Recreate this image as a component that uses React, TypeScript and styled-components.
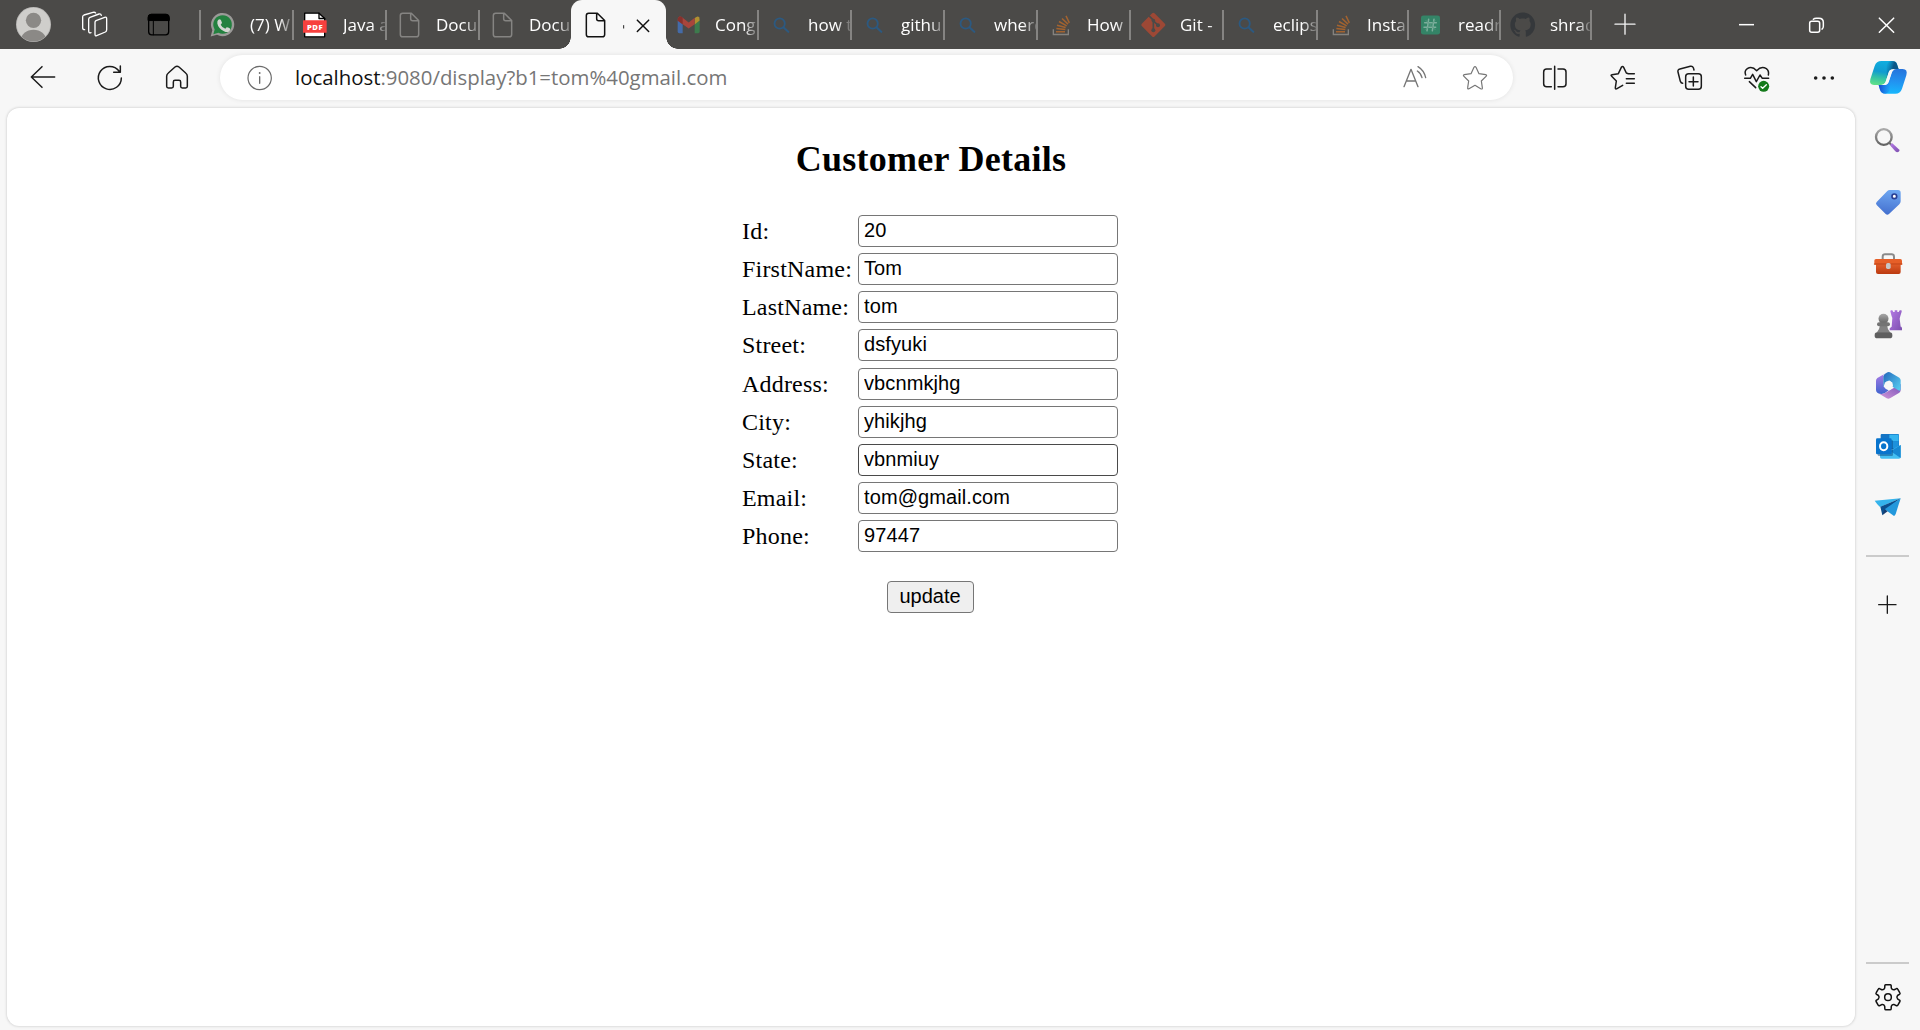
import React from 'react';
import styled, { createGlobalStyle } from 'styled-components';

const GlobalStyle = createGlobalStyle`
  * { box-sizing: border-box; }
  body { margin: 0; background: #f7f7f7; overflow: hidden; }
`;

const UI_FONT = `'Open Sans', 'Noto Sans', sans-serif`;

const Browser = styled.div`
  width: 1920px;
  height: 1030px;
  display: flex;
  flex-direction: column;
  background: #f7f7f7;
  font-family: ${UI_FONT};
`;

const TabStrip = styled.header`
  height: 49px;
  flex: none;
  display: flex;
  align-items: stretch;
  background: #4b4a48;
`;

const Slot = styled.div<{ $w: number; $h?: number }>`
  width: ${(p) => p.$w}px;
  height: ${(p) => (p.$h ? `${p.$h}px` : 'auto')};
  flex: none;
  display: flex;
  align-items: center;
  justify-content: center;
`;

const Art = styled.svg`
  display: block;
  flex: none;
  overflow: visible;
`;

const Separator = styled.span`
  width: 2px;
  height: 30px;
  flex: none;
  align-self: center;
  background: #858482;
`;

const LeadSeparator = styled(Separator)`
  margin-left: 4px;
`;

const Tab = styled.div<{ $w: number }>`
  width: ${(p) => p.$w}px;
  flex: none;
  display: flex;
  align-items: center;
  padding-left: 8px;
`;

const TabTitle = styled.span`
  flex: 1;
  min-width: 0;
  margin-left: 13px;
  overflow: hidden;
  white-space: nowrap;
  font-size: 17px;
  line-height: 26px;
  color: #fff;
  mask-image: linear-gradient(90deg, #000 68%, transparent 108%);
`;

const ActiveTab = styled.div`
  position: relative;
  width: 95px;
  flex: none;
  display: flex;
  align-items: center;
  padding-left: 10px;
  background: #f7f7f7;
  border-radius: 11px 11px 0 0;
  &::before,
  &::after {
    content: '';
    position: absolute;
    bottom: 0;
    width: 12px;
    height: 12px;
  }
  &::before {
    left: -12px;
    background: radial-gradient(circle at 0 0, transparent 11.5px, #f7f7f7 12px);
  }
  &::after {
    right: -12px;
    background: radial-gradient(circle at 100% 0, transparent 11.5px, #f7f7f7 12px);
  }
`;

const ActiveTitle = styled.div`
  margin-left: 11px;
`;

const Spacer = styled.div`
  flex: 1;
`;

const Toolbar = styled.nav`
  height: 58px;
  flex: none;
  display: flex;
  align-items: center;
  padding-left: 10px;
`;

const AddressBar = styled.div`
  width: 1293px;
  height: 45px;
  align-self: flex-start;
  margin: 6px 9px 0 10px;
  padding: 1px 8px 0 23px;
  display: flex;
  align-items: center;
  background: #fff;
  border-radius: 23px;
  box-shadow: 0 0 5px rgba(0, 0, 0, 0.09);
`;

const Url = styled.div`
  flex: 1;
  margin-left: 18px;
  padding-bottom: 2px;
  font-size: 20.4px;
  line-height: 28px;
  color: #767676;
  white-space: nowrap;
`;

const Host = styled.span`
  color: #111;
`;

const Body = styled.div`
  flex: 1;
  min-height: 0;
  display: flex;
  padding-top: 1px;
`;

const Page = styled.main`
  width: 1848px;
  margin: 0 0 4px 7px;
  padding-top: 31px;
  flex: none;
  background: #fff;
  border-radius: 12px;
  box-shadow: 0 0 3px rgba(0, 0, 0, 0.22);
  font-family: 'Liberation Serif', serif;
  color: #000;
`;

const Heading = styled.h2`
  margin: 0;
  font-size: 36px;
  line-height: 40px;
  font-weight: 700;
  letter-spacing: 0.26px;
  text-align: center;
`;

const Form = styled.form`
  margin: 36px 2px 0 0;
  display: flex;
  flex-direction: column;
  align-items: center;
`;

const Row = styled.div`
  height: 38.125px;
  display: grid;
  grid-template-columns: 116px 260px;
  align-items: start;
`;

const Label = styled.label`
  font-size: 24px;
  line-height: 32px;
  letter-spacing: 0.2px;
`;

const Field = styled.input<{ $hover?: boolean }>`
  width: 260px;
  height: 32px;
  padding: 0 5px 1px 5px;
  border: 1px solid ${(p) => (p.$hover ? '#4a4a4a' : '#767676')};
  border-radius: 4px;
  background: #fff;
  color: #000;
  font: 20px 'Liberation Sans', sans-serif;
  letter-spacing: 0.1px;
  outline: none;
`;

const Submit = styled.button`
  width: 87px;
  height: 32px;
  margin-top: 23px;
  padding: 0 0 2px;
  border: 1px solid #767676;
  border-radius: 4px;
  background: #efefef;
  color: #000;
  font: 20px 'Liberation Sans', sans-serif;
`;

const Sidebar = styled.aside`
  width: 65px;
  flex: none;
  display: flex;
  flex-direction: column;
  align-items: center;
  padding: 2px 0;
`;

const Rule = styled.span<{ $top?: number; $bottom: number }>`
  width: 43px;
  height: 2px;
  flex: none;
  margin: ${(p) => p.$top ?? 0}px 0 ${(p) => p.$bottom}px;
  background: #cbcbcb;
`;

/* Icons are drawn on a grid of three units to the pixel, centred on (x, y). */
type GlyphProps = { x: number; y: number; size?: number; children: React.ReactNode };
const Glyph = ({ x, y, size = 34, children }: GlyphProps) => (
  <Art
    width={size}
    height={size}
    viewBox={`${x - size * 1.5} ${y - size * 1.5} ${size * 3} ${size * 3}`}
    fill="none"
    strokeLinecap="round"
    strokeLinejoin="round"
  >
    {children}
  </Art>
);

const TabGlyph = ({ x, children }: { x: number; children: React.ReactNode }) => (
  <Glyph x={x} y={73.5} size={28}>
    {children}
  </Glyph>
);

const DocIcon = ({ color }: { color: string }) => (
  <TabGlyph x={1227}>
    <path
      d="M1208 38H1234L1256 60V102Q1256 109 1249 109H1208Q1201 109 1201 102V45Q1201 38 1208 38ZM1232 39V55Q1232 61 1238 61H1255"
      stroke={color}
      strokeWidth="4.5"
    />
  </TabGlyph>
);

const SearchIcon = () => (
  <TabGlyph x={903}>
    <circle cx="899" cy="69" r="15.5" stroke="#2c5980" strokeWidth="5.5" />
    <path d="M911 81L925 94" stroke="#2c5980" strokeWidth="6" />
  </TabGlyph>
);

const WhatsAppIcon = () => (
  <TabGlyph x={669}>
    <path d="M632 108L637 89A35 35 0 1 1 651 103Z" fill="#9b9a98" />
    <path d="M640 101L644 87A28 28 0 1 1 655 97Z" fill="#23813f" />
    <path
      d="M655 58Q660 54 663 59L666 67Q665 70 662 73Q667 83 676 85L680 80Q684 80 690 84Q692 88 688 92Q682 97 672 92Q655 84 652 69Q651 62 655 58Z"
      fill="#d3d6d2"
    />
  </TabGlyph>
);

const PdfFont = styled.text`
  font: 800 23px 'Open Sans', sans-serif;
  letter-spacing: 1.5px;
`;

const PdfIcon = () => (
  <TabGlyph x={948}>
    <path d="M914 38H957L974 54V109H914Z" fill="#fff" stroke="#000" strokeWidth="4" />
    <path d="M957 38V54H974" stroke="#000" strokeWidth="4" />
    <rect x="909" y="59" width="71" height="38" rx="2" fill="#f7403e" />
    <PdfFont x="945" y="87" textAnchor="middle" fill="#fff">PDF</PdfFont>
  </TabGlyph>
);

const GmailIcon = () => (
  <TabGlyph x={624}>
    <path d="M593 60L608 71V98H598Q593 98 593 93Z" fill="#446ba8" />
    <path d="M644 71L659 60V93Q659 98 654 98H644Z" fill="#3d7b4d" />
    <path d="M644 53L648 50Q654 46 658 51L659 60L644 72Z" fill="#b09030" />
    <path d="M593 60Q592 51 598 48Q603 47 608 52L626 66L644 52V71L626 84L608 71Z" fill="#a8453c" />
    <path d="M593 60Q592 51 598 48Q603 47 608 52V71Z" fill="#87312d" />
  </TabGlyph>
);

const StackIcon = () => (
  <TabGlyph x={300}>
    <path d="M280 86V102H325V86" stroke="#85827e" strokeWidth="4" strokeLinecap="butt" strokeLinejoin="miter" />
    <path
      d="M288 94H315M289 84L316 87M291 74L317 81M297 63L320 76M306 54L324 71M318 46L328 67"
      stroke="#a3632f"
      strokeWidth="4.5"
      strokeLinecap="butt"
    />
  </TabGlyph>
);

const GitIcon = () => (
  <TabGlyph x={579}>
    <rect x="553" y="46" width="54" height="54" rx="5" transform="rotate(45 580 73)" fill="#9d4835" />
    <path d="M568 47L580 59V89M580 61L593 73" stroke="#4b4a48" strokeWidth="5" />
    <circle cx="580" cy="60" r="5.5" fill="#4b4a48" />
    <circle cx="580" cy="89" r="6" fill="#4b4a48" />
    <circle cx="594" cy="74" r="6" fill="#4b4a48" />
  </TabGlyph>
);

const ReadmeIcon = () => (
  <TabGlyph x={1413}>
    <rect x="1383" y="45" width="57" height="57" rx="7" fill="#348467" />
    <path
      d="M1406 56L1401 91M1422 56L1417 91M1394 67H1429M1392 80H1427"
      stroke="#7cae9c"
      strokeWidth="4.5"
    />
    <path d="M1398 60L1425 87M1398 87L1425 60" stroke="#5a9a82" strokeWidth="3" />
  </TabGlyph>
);

const GitHubIcon = () => (
  <TabGlyph x={249}>
    <g transform="translate(211 36) scale(4.65)">
      <path
        fill="#35383b"
        d="M8 0C3.58 0 0 3.58 0 8c0 3.54 2.29 6.53 5.47 7.59.4.07.55-.17.55-.38 0-.19-.01-.82-.01-1.49-2.01.37-2.53-.49-2.69-.94-.09-.23-.48-.94-.82-1.13-.28-.15-.68-.52-.01-.53.63-.01 1.08.58 1.23.82.72 1.21 1.87.87 2.33.66.07-.52.28-.87.51-1.07-1.78-.2-3.64-.89-3.64-3.95 0-.87.31-1.59.82-2.15-.08-.2-.36-1.02.08-2.12 0 0 .67-.21 2.2.82.64-.18 1.32-.27 2-.27s1.36.09 2 .27c1.53-1.04 2.2-.82 2.2-.82.44 1.1.16 1.92.08 2.12.51.56.82 1.27.82 2.15 0 3.07-1.87 3.75-3.65 3.95.29.25.54.73.54 1.48 0 1.07-.01 1.93-.01 2.2 0 .21.15.46.55.38A8.01 8.01 0 0 0 16 8c0-4.42-3.58-8-8-8"
      />
    </g>
  </TabGlyph>
);

const CopilotIcon = () => (
  <Glyph x={1344} y={234} size={40}>
    <defs>
      <linearGradient id="cpLeft" x1="0.5" y1="0" x2="0.3" y2="1">
        <stop offset="0" stopColor="#10aee0" />
        <stop offset="0.45" stopColor="#119cd0" />
        <stop offset="0.72" stopColor="#35c3a4" />
        <stop offset="1" stopColor="#5fe08a" />
      </linearGradient>
      <linearGradient id="cpRight" x1="0.6" y1="0" x2="0.5" y2="1">
        <stop offset="0" stopColor="#2574dc" />
        <stop offset="0.5" stopColor="#2292f0" />
        <stop offset="1" stopColor="#17b7fd" />
      </linearGradient>
      <linearGradient id="cpFold" x1="0" y1="0" x2="1" y2="0.4">
        <stop offset="0" stopColor="#0b7fb8" stopOpacity="0" />
        <stop offset="0.6" stopColor="#0a5687" />
      </linearGradient>
      <linearGradient id="cpFoot" x1="0" y1="0" x2="1" y2="0">
        <stop offset="0" stopColor="#1746cf" />
        <stop offset="1" stopColor="#1a6de6" stopOpacity="0" />
      </linearGradient>
    </defs>
    <path d="M1376 208L1371 193Q1368 183 1356 183H1324Q1309 183 1304 198L1291 238Q1287 255 1302 255H1322Q1334 255 1338 242L1345 219Q1348 208 1359 208Z" fill="url(#cpLeft)" />
    <path d="M1340 196Q1344 183 1356 183Q1368 183 1371 193L1376 208H1359Q1348 208 1345 219L1340 235Z" fill="url(#cpFold)" />
    <path d="M1316 255L1320 269Q1324 281 1336 281H1366Q1381 281 1386 266L1399 226Q1404 207 1388 207H1370Q1358 207 1354 220L1346 245Q1342 255 1332 255Z" fill="url(#cpRight)" />
    <path d="M1316 255L1320 269Q1324 281 1336 281Q1346 281 1349 268L1354 225L1346 245Q1342 255 1332 255Z" fill="url(#cpFoot)" />
    <path d="M1346 218Q1349 208 1359 208H1368Q1358 209 1355 220L1346 246Q1343 255 1333 255H1324Q1335 254 1338 243Z" fill="#f7f7f7" />
  </Glyph>
);

const SideGlyph = ({ y, children }: { y: number; children: React.ReactNode }) => (
  <Slot $w={65} $h={61}>
    <Glyph x={142.5} y={y} size={31}>
      {children}
    </Glyph>
  </Slot>
);

const polar = (r: number, deg: number) => {
  const a = (deg * Math.PI) / 180;
  return `${(204 + r * Math.cos(a)).toFixed(1)} ${(201.5 + r * Math.sin(a)).toFixed(1)}`;
};

/* Six-toothed settings cog: each tooth flares out of a shallow valley. */
const cogPath =
  [30, 90, 150, 210, 270, 330]
    .map(
      (t, i) =>
        `${i ? 'L' : 'M'}${polar(29, t - 20)}L${polar(36.5, t - 15)}Q${polar(38.5, t - 13)} ${polar(38, t - 10)}L${polar(38, t + 10)}Q${polar(38.5, t + 13)} ${polar(36.5, t + 15)}L${polar(29, t + 20)}Q${polar(24.5, t + 30)} ${polar(29, t + 40)}`,
    )
    .join('') + 'Z';

type TabInfo = { title: string; icon: React.ReactNode; w?: number; last?: boolean };

const leftTabs: TabInfo[] = [
  { title: '(7) W', icon: <WhatsAppIcon /> },
  { title: 'Java a', icon: <PdfIcon /> },
  { title: 'Docu', icon: <DocIcon color="#858482" /> },
  { title: 'Docu', icon: <DocIcon color="#858482" />, w: 91, last: true },
];

const rightTabs: TabInfo[] = [
  { title: 'Cong', icon: <GmailIcon /> },
  { title: 'how t', icon: <SearchIcon /> },
  { title: 'githu', icon: <SearchIcon /> },
  { title: 'where', icon: <SearchIcon /> },
  { title: 'How', icon: <StackIcon /> },
  { title: 'Git -', icon: <GitIcon /> },
  { title: 'eclips', icon: <SearchIcon />, w: 94 },
  { title: 'Instal', icon: <StackIcon />, w: 91 },
  { title: 'readn', icon: <ReadmeIcon />, w: 92 },
  { title: 'shrad', icon: <GitHubIcon />, w: 91 },
];

const renderTab = (t: TabInfo, i: number) => (
  <Tab key={i} $w={t.w ?? 93}>
    {t.icon}
    <TabTitle>{t.title}</TabTitle>
    {!t.last && <Separator />}
  </Tab>
);

const fields = [
  ['Id', '20'],
  ['FirstName', 'Tom'],
  ['LastName', 'tom'],
  ['Street', 'dsfyuki'],
  ['Address', 'vbcnmkjhg'],
  ['City', 'yhikjhg'],
  ['State', 'vbnmiuy'],
  ['Email', 'tom@gmail.com'],
  ['Phone', '97447'],
];

const INK = '#1b1b1b';

export default function App() {
  return (
    <Browser>
      <GlobalStyle />
      <TabStrip>
        <Slot $w={67}>
          <Glyph x={100.5} y={73.5} size={35}>
            <clipPath id="avatar">
              <circle cx="100.5" cy="73.5" r="51" />
            </clipPath>
            <circle cx="100.5" cy="73.5" r="52.5" fill="#bab9b7" />
            <g clipPath="url(#avatar)">
              <circle cx="100.5" cy="73.5" r="50" fill="#cfcecb" />
              <circle cx="100.5" cy="61" r="23" fill="#8b8986" />
              <ellipse cx="100.5" cy="121" rx="38" ry="32" fill="#8b8986" />
            </g>
          </Glyph>
        </Slot>
        <Slot $w={56}>
          <Glyph x={286.5} y={73.5} size={35}>
            <path
              d="M285 67Q285 64 288 62L314 52Q320 50 320 56V89Q320 94 316 96L290 107Q285 109 285 103Z"
              stroke="#fff" strokeWidth="4"
            />
            <path
              d="M273 98Q266 100 266 93V58Q266 54 270 52L297 42Q303 41 304 46M254 89Q248 89 248 83V50Q248 47 252 45L279 37Q285 36 287 39"
              stroke="#fff" strokeWidth="4"
            />
          </Glyph>
        </Slot>
        <Slot $w={72}>
          <Glyph x={477} y={73.5} size={34}>
            <rect x="446" y="43" width="60" height="60" rx="9" stroke="#000" strokeWidth="4" />
            <path d="M444 59V51Q444 41 454 41H498Q508 41 508 51V59ZM460 57V103" fill="#000" stroke="#000" strokeWidth="3" />
          </Glyph>
        </Slot>
        <LeadSeparator />
        {leftTabs.map(renderTab)}
        <ActiveTab>
          <DocIcon color="#111" />
          <ActiveTitle>
            <Glyph x={432} y={73.5} size={8}>
              <path d="M431 74V84" stroke="#222" strokeWidth="3" strokeLinecap="butt" />
            </Glyph>
          </ActiveTitle>
          <Glyph x={486} y={73.5} size={28}>
            <path d="M472 59L506 93M506 59L472 93" stroke="#111" strokeWidth="4.5" />
          </Glyph>
        </ActiveTab>
        {rightTabs.map(renderTab)}
        <Slot $w={66}>
          <Glyph x={555} y={73.5} size={34}>
            <path d="M525 71H585M555 41V101" stroke="#f4f4f4" strokeWidth="4" />
          </Glyph>
        </Slot>
        <Spacer />
        <Slot $w={70}>
          <Glyph x={915} y={73.5} size={30}>
            <path d="M897 72.5H942" stroke="#fff" strokeWidth="4.5" strokeLinecap="butt" />
          </Glyph>
        </Slot>
        <Slot $w={70}>
          <Glyph x={1125} y={73.5} size={30}>
            <rect x="1109" y="62" width="30" height="33" rx="6" stroke="#fff" strokeWidth="4.5" />
            <path d="M1120 56Q1123 53 1129 53H1137Q1150 53 1150 66V77Q1150 83 1146 86" stroke="#fff" strokeWidth="4.5" />
          </Glyph>
        </Slot>
        <Slot $w={70}>
          <Glyph x={1335} y={73.5} size={30}>
            <path d="M1318 53L1361 95M1361 53L1318 95" stroke="#fff" strokeWidth="4.5" />
          </Glyph>
        </Slot>
      </TabStrip>

      <Toolbar>
        <Slot $w={66}>
          <Glyph x={129} y={234}>
            <path d="M164 231H94M126 200L94 231L126 262" stroke={INK} strokeWidth="4.5" />
          </Glyph>
        </Slot>
        <Slot $w={68}>
          <Glyph x={330} y={234}>
            <path d="M364 234A34.5 34.5 0 1 1 357 213M361 198V217H341" stroke={INK} strokeWidth="4.5" />
          </Glyph>
        </Slot>
        <Slot $w={66}>
          <Glyph x={531} y={234}>
            <path
              d="M525 201Q531 196 537 201L557 219Q562 223 562 229V259Q562 264 557 264H547Q542 264 542 259V246Q542 241 537 241H525Q520 241 520 246V259Q520 264 515 264H505Q500 264 500 259V229Q500 223 505 219Z"
              stroke={INK} strokeWidth="4.5"
            />
          </Glyph>
        </Slot>
        <AddressBar>
          <Glyph x={780} y={234}>
            <circle cx="779" cy="234" r="35" stroke="#6b6b6b" strokeWidth="3.6" />
            <path d="M779 230V250" stroke="#6b6b6b" strokeWidth="4" />
            <circle cx="779" cy="219" r="2.8" fill="#6b6b6b" />
          </Glyph>
          <Url>
            <Host>localhost</Host>:9080/display?b1=tom%40gmail.com
          </Url>
          <Slot $w={60}>
            <Glyph x={1365} y={234}>
              <path
                d="M1332 260L1353 208L1374 260M1339 243H1367M1372 213Q1383 220 1386 233M1374 200Q1392 211 1397 233"
                stroke="#767676" strokeWidth="4"
              />
            </Glyph>
          </Slot>
          <Slot $w={60}>
            <Glyph x={105} y={234}>
              <path
                d="M102 202Q105 197 108 202L117 221L137 224Q142 225 138 229L124 243L127 263Q128 269 122 266L105 256L87 266Q82 268 83 263L86 243L72 229Q68 225 73 224L93 221Z"
                stroke="#767676" strokeWidth="3.6"
              />
            </Glyph>
          </Slot>
        </AddressBar>
        <Slot $w={66}>
          <Glyph x={345} y={234}>
            <path
              d="M344 199V268M334 207H320Q311 207 311 216V251Q311 260 320 260H334M354 207H369Q378 207 378 216V251Q378 260 369 260H354"
              stroke={INK} strokeWidth="4.5"
            />
          </Glyph>
        </Slot>
        <Slot $w={68}>
          <Glyph x={546} y={234}>
            <path
              d="M583 221H565L559 219L551 202Q548 197 544 202L535 221L516 224Q511 225 515 229L529 243L526 263Q526 269 531 266L548 256M559 236H583M559 250H583"
              stroke={INK} strokeWidth="4.5"
            />
          </Glyph>
        </Slot>
        <Slot $w={66}>
          <Glyph x={747} y={234}>
            <rect x="737" y="221" width="47" height="47" rx="9" stroke={INK} strokeWidth="4.5" />
            <path
              d="M760 231V258M747 245H774M762 210L760 203Q758 198 751 199L720 207Q712 209 714 216L721 244Q723 250 728 250"
              stroke={INK} strokeWidth="4.5"
            />
          </Glyph>
        </Slot>
        <Slot $w={70}>
          <Glyph x={951} y={234}>
            <path
              d="M917 225Q912 213 922 206Q936 197 950 212Q964 197 979 206Q988 213 985 225M914 235H931L938 223L949 245L960 225L967 235H986M928 245L947 263"
              stroke={INK} strokeWidth="4.5"
            />
            <circle cx="971" cy="259" r="16.5" fill="#147a1b" />
            <path d="M963 260L968 265L979 254" stroke="#fff" strokeWidth="4" />
          </Glyph>
        </Slot>
        <Slot $w={64}>
          <Glyph x={1152} y={234}>
            <circle cx="1127" cy="234" r="5.4" fill={INK} />
            <circle cx="1152" cy="234" r="5.4" fill={INK} />
            <circle cx="1177" cy="234" r="5.4" fill={INK} />
          </Glyph>
        </Slot>
        <Slot $w={64}>
          <CopilotIcon />
        </Slot>
      </Toolbar>

      <Body>
        <Page>
          <Heading>Customer Details</Heading>
          <Form onSubmit={(e) => e.preventDefault()}>
            {fields.map(([name, value]) => (
              <Row key={name}>
                <Label htmlFor={name}>{name}:</Label>
                <Field id={name} defaultValue={value} $hover={name === 'State'} spellCheck={false} />
              </Row>
            ))}
            <Submit type="submit">update</Submit>
          </Form>
        </Page>

        <Sidebar>
          <SideGlyph y={91.5}>
            <defs>
              <linearGradient id="violet" x1="0" y1="0" x2="1" y2="1">
                <stop offset="0" stopColor="#b57be6" />
                <stop offset="1" stopColor="#7c4fae" />
              </linearGradient>
              <linearGradient id="grey" x1="0" y1="0" x2="0" y2="1">
                <stop offset="0" stopColor="#a9a9a9" />
                <stop offset="1" stopColor="#636363" />
              </linearGradient>
            </defs>
            <path d="M148 99L158 108" stroke="#6d6d6d" strokeWidth="6" />
            <circle cx="131.500" cy="81" r="23.500" stroke="url(#grey)" strokeWidth="7" />
            <path d="M152 108Q150 104 153 102L157 100L178 119Q180 122 176 125L172 127Q169 127 166 124Z" fill="url(#violet)" />
          </SideGlyph>
          <SideGlyph y={274.5}>
            <defs>
              <linearGradient id="tag" x1="0.6" y1="0" x2="0.5" y2="1">
                <stop offset="0" stopColor="#6fa8f2" />
                <stop offset="1" stopColor="#4470cf" />
              </linearGradient>
            </defs>
            <path d="M149 240H174Q182 240 182 248V274Q182 279 178 283L147 312Q142 316 137 312L110 285Q106 280 110 276L142 243Q145 240 149 240Z" fill="url(#tag)" />
            <circle cx="163" cy="259" r="7" fill="#fff" stroke="#293f94" strokeWidth="5" />
          </SideGlyph>
          <SideGlyph y={457.5}>
            <defs>
              <linearGradient id="box" x1="0" y1="0" x2="0" y2="1">
                <stop offset="0" stopColor="#e4602c" />
                <stop offset="1" stopColor="#bb3a10" />
              </linearGradient>
            </defs>
            <path d="M128 449V440Q128 433 135 433H155Q162 433 162 440V449" stroke="#8a8a8a" strokeWidth="6" strokeLinecap="butt" />
            <path d="M108 460H182V486Q182 492 176 492H114Q108 492 108 486Z" fill="url(#box)" />
            <path d="M108 447H181Q186 447 186 452V464H103V452Q103 447 108 447Z" fill="#e65f28" />
            <path d="M103 462H186" stroke="#bf4216" strokeWidth="3" />
            <rect x="138" y="459" width="14" height="18" rx="5" fill="#c6c6c6" />
          </SideGlyph>
          <SideGlyph y={640.5}>
            <path d="M151 604Q151 601 154 601H157L160 606H164V601H172V606H176L179 601H183Q186 601 185 605L181 618Q180 621 179 626L182 650H184Q187 652 186 661H149V655L155 650L157 624Q155 619 154 616Z" fill="url(#violet)" />
            <circle cx="130.500" cy="626" r="15" fill="url(#grey)" />
            <path d="M120 646H141Q142 658 151 668H110Q119 658 120 646Z" fill="#828282" />
            <rect x="111" y="637" width="39" height="12" rx="6" fill="#747474" />
            <rect x="104" y="667" width="53" height="18" rx="8" fill="#5f5f5f" />
          </SideGlyph>
          <SideGlyph y={73.5}>
            <defs>
              <linearGradient id="m1" x1="0" y1="0" x2="0" y2="1">
                <stop offset="0" stopColor="#b07ce6" />
                <stop offset="1" stopColor="#3f64cf" />
              </linearGradient>
              <linearGradient id="m2" x1="0" y1="0" x2="1" y2="0.8">
                <stop offset="0" stopColor="#2467bb" />
                <stop offset="1" stopColor="#52c8ee" />
              </linearGradient>
              <linearGradient id="m3" x1="1" y1="0" x2="0" y2="1">
                <stop offset="0" stopColor="#7650b9" />
                <stop offset="1" stopColor="#d79ad9" />
              </linearGradient>
            </defs>
            <path d="M140 38L112 54Q108 57 108 62V90Q108 95 112 98Q121 105 134 100L146 91L133 82Q130 80 130 75V45Z" fill="url(#m1)" />
            <path d="M114 99Q124 105 135 99L182 72V90Q182 95 178 98L150 115Q145 117 140 115Z" fill="url(#m3)" />
            <path d="M130 80V49Q132 41 140 38Q145 34 150 37L178 53Q182 56 182 61V88Q180 94 175 91L157 80V68L147 61Z" fill="url(#m2)" />
            <circle cx="145.500" cy="76" r="13" fill="#f7f7f7" />
          </SideGlyph>
          <SideGlyph y={256.5}>
            <rect x="122" y="222" width="55" height="46" rx="3" fill="#1475c5" />
            <rect x="148" y="224" width="28" height="20" fill="#35b4ef" />
            <rect x="148" y="244" width="28" height="20" fill="#1c91dc" />
            <path d="M120 258L150 272L182 255V291Q182 296 177 296H125Q120 296 120 291Z" fill="#43bff2" />
            <path d="M182 255L152 274L182 294Z" fill="#1687d2" />
            <rect x="113" y="240" width="46" height="48" rx="4" fill="#0e4a80" opacity="0.5" />
            <rect x="108" y="235" width="47" height="48" rx="4" fill="#0874cd" />
            <ellipse cx="131" cy="259" rx="11" ry="12" stroke="#fff" strokeWidth="6" />
          </SideGlyph>
          <SideGlyph y={439.5}>
            <path d="M104 422L182 415L120 441Q110 431 104 422Z" fill="#35b4ec" />
            <path d="M182 415L121 440L127 466L140 448Z" fill="#0c4f8d" />
            <path d="M182 415L134 448L162 468Q165 467 167 462Z" fill="#2398dc" />
            <path d="M127 466L134 448L143 454Z" fill="#173d70" />
          </SideGlyph>
          <Rule $top={18} $bottom={17} />
          <SideGlyph y={733.5}>
            <path d="M116 734H168M142 708V760" stroke={INK} strokeWidth="4" />
          </SideGlyph>
          <Spacer />
          <Rule $bottom={3} />
          <Slot $w={65} $h={61}>
            <Glyph x={202.5} y={202.5} size={31}>
              <path d={cogPath} stroke="#111" strokeWidth="4.500" />
              <circle cx="204" cy="201.500" r="10" stroke="#111" strokeWidth="4.500" />
            </Glyph>
          </Slot>
        </Sidebar>
      </Body>
    </Browser>
  );
}
